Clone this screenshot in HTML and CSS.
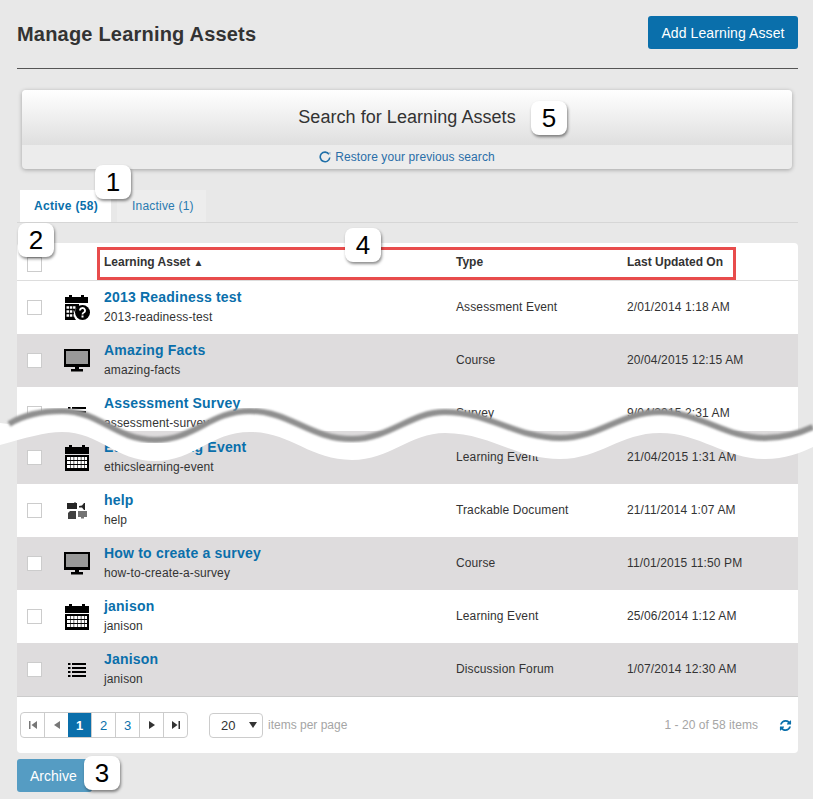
FILE: index.html
```html
<!DOCTYPE html>
<html lang="en">
  <head>
    <meta charset="UTF-8" />
    <title>Manage Learning Assets</title>
    <link rel="stylesheet" href="styles.css">
  </head>
  <body>
    <!-- Icon Sprites -->
    <svg class="sprites" aria-hidden="true">
      <symbol id="icon-calendar" viewBox="0 0 24 26">
        <path d="M0 2h4V0h3v2h10V0h3v2h4v7H0z" />
        <rect y="10" width="24" height="16" />
        <path d="M2 13.500h20M2 17.500h20M2 21.500h20" stroke="#fff" stroke-width="3" stroke-dasharray="3 .6" />
      </symbol>
      <symbol id="icon-calendar-q" viewBox="0 0 25 25">
        <path d="M0 2h4V0h3v2h9V0h3v2h4v6H0z" />
        <path d="M0 9h14v3a8 8 0 0 0-3 13H0z" />
        <path d="M1.500 12.500h9M1.500 16.500h7M1.500 20.500h7" stroke="#fff" stroke-width="2.500" stroke-dasharray="2.500 .8" />
        <circle cx="17.500" cy="17.500" r="7.500" />
        <path d="M15 15.500a2.500 2.500 0 1 1 3.500 2.300c-.7.300-1 .8-1 1.600" fill="none" stroke="#fff" stroke-width="1.800" />
        <rect x="16.500" y="20.500" width="2" height="2" fill="#fff" />
      </symbol>
      <symbol id="icon-monitor" viewBox="0 0 26 23">
        <path d="M0 0h26v18H0z" />
        <path d="M2 2h22v13H2z" fill="#999" />
        <path d="M11 18h4v2h4v2.500H7V20h4z" />
      </symbol>
      <symbol id="icon-list" viewBox="0 0 18 16">
        <path d="M0 1h2.500v2H0zM4 1h14v2H4zM0 5h2.500v2H0zM4 5h14v2H4zM0 9h2.500v2H0zM4 9h14v2H4zM0 13h2.500v2H0zM4 13h14v2H4z" />
      </symbol>
      <symbol id="icon-document" viewBox="0 0 20 17">
        <path d="M0 1h7V.5h2V1h1v6H0z" opacity=".85" />
        <path d="M12 4l3-.5L17 1h1v7h-1l-2-2.500h-3z" opacity=".85" />
        <path d="M1 11l2-2h6v8H1z" opacity=".75" />
        <path d="M11 9h9v6h-3v1.500h-3V15h-3z" opacity=".55" />
      </symbol>
      <symbol id="icon-refresh" viewBox="0 0 1792 1792">
        <path d="M1639 1056q0 5-1 7-64 268-268 434.500t-478 166.500q-146 0-282.500-55t-243.500-157l-129 129q-19 19-45 19t-45-19-19-45v-448q0-26 19-45t45-19h448q26 0 45 19t19 45-19 45l-137 137q71 66 161 102t187 36q134 0 250-65t186-179q11-17 53-117 8-23 30-23h192q13 0 22.500 9.500t9.500 22.500zm25-800v448q0 26-19 45t-45 19h-448q-26 0-45-19t-19-45 19-45l138-138q-148-137-349-137-134 0-250 65t-186 179q-11 17-53 117-8 23-30 23h-199q-13 0-22.500-9.500t-9.500-22.500v-7q65-268 270-434.500t480-166.500q146 0 284 55.500t245 156.500l130-129q19-19 45-19t45 19 19 45z" />
      </symbol>
    </svg>

    <!-- Page Header -->
    <header class="page-header">
      <h1>Manage Learning Assets</h1>
      <button class="btn btn-add" type="button">Add Learning Asset</button>
    </header>

    <!-- Search Panel -->
    <section class="search-panel">
      <h2>Search for Learning Assets</h2>
      <a class="restore-link" href="#">
        <svg viewBox="0 0 12 12" width="12" height="12">
          <path d="M10 3.200A4.800 4.800 0 1 0 10.800 6.500" fill="none" stroke="#1f6fa8" stroke-width="1.600" />
          <path d="M9 1.500l2.500-.5v3z" fill="#9db9cf" />
        </svg>
        Restore your previous search
      </a>
    </section>

    <!-- Tabs -->
    <ul class="tabs">
      <li class="tab active">Active (58)</li>
      <li class="tab">Inactive (1)</li>
    </ul>

    <!-- Asset Table -->
    <section class="asset-card">
      <div class="asset-row head-row">
        <span class="cell-check"><input type="checkbox" /></span>
        <span class="cell-icon"></span>
        <span class="head-label">Learning Asset <i class="sort-arrow">▲</i></span>
        <span class="head-label">Type</span>
        <span class="head-label">Last Updated On</span>
      </div>

      <div class="asset-row">
        <span class="cell-check"><input type="checkbox" /></span>
        <span class="cell-icon"><svg width="25" height="25"><use href="#icon-calendar-q" /></svg></span>
        <div class="cell-name"><a href="#">2013 Readiness test</a><small>2013-readiness-test</small></div>
        <span class="cell-text">Assessment Event</span>
        <span class="cell-text">2/01/2014 1:18 AM</span>
      </div>
      <div class="asset-row shaded">
        <span class="cell-check"><input type="checkbox" /></span>
        <span class="cell-icon"><svg width="26" height="23"><use href="#icon-monitor" /></svg></span>
        <div class="cell-name"><a href="#">Amazing Facts</a><small>amazing-facts</small></div>
        <span class="cell-text">Course</span>
        <span class="cell-text">20/04/2015 12:15 AM</span>
      </div>
      <!-- This row runs under the torn edge, so it is shorter than the rest. -->
      <div class="asset-row cut-row">
        <span class="cell-check"><input type="checkbox" /></span>
        <span class="cell-icon"><svg width="18" height="16"><use href="#icon-list" /></svg></span>
        <div class="cell-name"><a href="#">Assessment Survey</a><small>assessment-survey</small></div>
        <span class="cell-text">Survey</span>
        <span class="cell-text">9/04/2015 2:31 AM</span>
      </div>
      <div class="asset-row shaded">
        <span class="cell-check"><input type="checkbox" /></span>
        <span class="cell-icon"><svg width="24" height="26"><use href="#icon-calendar" /></svg></span>
        <div class="cell-name"><a href="#">Ethicslearning Event</a><small>ethicslearning-event</small></div>
        <span class="cell-text">Learning Event</span>
        <span class="cell-text">21/04/2015 1:31 AM</span>
      </div>
      <div class="asset-row">
        <span class="cell-check"><input type="checkbox" /></span>
        <span class="cell-icon"><svg width="20" height="17"><use href="#icon-document" /></svg></span>
        <div class="cell-name"><a href="#">help</a><small>help</small></div>
        <span class="cell-text">Trackable Document</span>
        <span class="cell-text">21/11/2014 1:07 AM</span>
      </div>
      <div class="asset-row shaded">
        <span class="cell-check"><input type="checkbox" /></span>
        <span class="cell-icon"><svg width="26" height="23"><use href="#icon-monitor" /></svg></span>
        <div class="cell-name"><a href="#">How to create a survey</a><small>how-to-create-a-survey</small></div>
        <span class="cell-text">Course</span>
        <span class="cell-text">11/01/2015 11:50 PM</span>
      </div>
      <div class="asset-row">
        <span class="cell-check"><input type="checkbox" /></span>
        <span class="cell-icon"><svg width="24" height="26"><use href="#icon-calendar" /></svg></span>
        <div class="cell-name"><a href="#">janison</a><small>janison</small></div>
        <span class="cell-text">Learning Event</span>
        <span class="cell-text">25/06/2014 1:12 AM</span>
      </div>
      <div class="asset-row shaded">
        <span class="cell-check"><input type="checkbox" /></span>
        <span class="cell-icon"><svg width="18" height="16"><use href="#icon-list" /></svg></span>
        <div class="cell-name"><a href="#">Janison</a><small>janison</small></div>
        <span class="cell-text">Discussion Forum</span>
        <span class="cell-text">1/07/2014 12:30 AM</span>
      </div>

      <!-- Pager -->
      <footer class="pager-bar">
        <ul class="pager">
          <li><svg viewBox="0 0 8 8" width="8" height="8"><path d="M0 0h1.500v8H0zM8 0v8L2.500 4z" fill="#777" /></svg></li>
          <li><svg viewBox="0 0 8 8" width="8" height="8"><path d="M7 0v8L1 4z" fill="#777" /></svg></li>
          <li class="current">1</li>
          <li class="page-num">2</li>
          <li class="page-num">3</li>
          <li><svg viewBox="0 0 8 8" width="8" height="8"><path d="M1 0v8l6-4z" fill="#333" /></svg></li>
          <li><svg viewBox="0 0 8 8" width="8" height="8"><path d="M0 0v8l5.500-4zM6.500 0H8v8H6.500z" fill="#333" /></svg></li>
        </ul>
        <div class="page-size">20<i class="page-size-arrow"></i></div>
        <span class="pager-note">items per page</span>
        <span class="pager-note pager-count">1 - 20 of 58 items</span>
        <svg class="refresh" width="13" height="13"><use href="#icon-refresh" /></svg>
      </footer>
    </section>

    <button class="btn btn-archive" type="button">Archive</button>

    <!-- Torn Edge -->
    <svg class="tear" viewBox="0 400 813 70" width="813" height="70" aria-hidden="true">
      <defs>
        <filter id="soft"><feGaussianBlur stdDeviation="0.9" /></filter>
      </defs>
      <path fill="#fff" d="M0 423 L8 424 C25 414 45 411 62 411 C100 411 115 440 155 440 C195 440 210 411 250 411 C290 411 310 439 352 439 C390 439 410 412 445 412 C490 412 515 438 560 438 C600 438 620 412 660 412 C700 412 725 438 765 438 C785 438 800 433 813 427 L813 447 C800 453 785 459 765 459 C725 459 700 433 660 433 C620 433 600 459 560 459 C515 459 490 433 445 433 C410 433 390 460 352 460 C310 460 290 432 250 432 C210 432 195 461 155 461 C115 461 100 432 62 432 C45 432 25 438 0 445 Z" />
      <path fill="none" stroke="#8f8f8f" stroke-width="6" filter="url(#soft)" d="M9 424 C25 414 45 411 62 411 C100 411 115 440 155 440 C195 440 210 411 250 411 C290 411 310 439 352 439 C390 439 410 412 445 412 C490 412 515 438 560 438 C600 438 620 412 660 412 C700 412 725 438 765 438 C785 438 800 433 813 427" />
    </svg>

    <!-- Annotations -->
    <div class="header-mark"></div>
    <span class="callout callout-1">1</span>
    <span class="callout callout-2">2</span>
    <span class="callout callout-3">3</span>
    <span class="callout callout-4">4</span>
    <span class="callout callout-5">5</span>
  </body>
</html>
```
FILE: styles.css
```css
* {
  box-sizing: border-box;
}
html,
body {
  height: 799px;
  overflow: hidden;
}
body {
  position: relative;
  margin: 0;
  padding: 16px 15px 0 17px;
  background-color: #e8e8e8;
  color: #333333;
  font-family: "Liberation Sans", Arial, sans-serif;
  font-size: 12px;
}
a {
  color: #0a6fab;
  text-decoration: none;
}
.sprites {
  display: none;
}
.btn {
  height: 33px;
  border: none;
  border-radius: 3px;
  color: #ffffff;
  font-family: inherit;
  font-size: 14px;
}

/* Page header */
.page-header {
  display: flex;
  justify-content: space-between;
  align-items: flex-start;
  height: 53px;
  border-bottom: 1px solid #555555;
}
.page-header h1 {
  margin: 6px 0 0;
  font-size: 20px;
  letter-spacing: 0.2px;
  line-height: 24px;
}
.btn-add {
  width: 150px;
  background-color: #0a6fab;
  letter-spacing: 0.1px;
}

/* Search panel */
.search-panel {
  display: flex;
  flex-direction: column;
  height: 79px;
  margin: 21px 6px 0 5px;
  border-radius: 4px;
  background-color: #ececec;
  box-shadow: 0 1px 4px rgba(0, 0, 0, 0.3);
  overflow: hidden;
}
.search-panel h2 {
  height: 55px;
  margin: 0;
  background: linear-gradient(#ffffff, #dfdfdf);
  font-size: 18px;
  font-weight: normal;
  letter-spacing: 0.05px;
  line-height: 54px;
  text-align: center;
}
.restore-link {
  display: flex;
  justify-content: center;
  align-items: center;
  column-gap: 4px;
  flex: 1;
  color: #2a6ea8;
  letter-spacing: 0.1px;
}

/* Tabs */
.tabs {
  display: flex;
  column-gap: 6px;
  height: 33px;
  margin: 21px 0 0;
  padding: 0 0 0 3px;
  border-bottom: 1px solid #d6d6d6;
  list-style: none;
}
.tab {
  width: 89px;
  height: 32px;
  padding-left: 15px;
  background-color: #ededed;
  color: #2a7ab0;
  letter-spacing: 0.2px;
  line-height: 32px;
}
.tab.active {
  width: 91px;
  padding-left: 14px;
  background-color: #ffffff;
  color: #0a6fab;
  font-weight: bold;
  letter-spacing: 0.3px;
}

/* Asset table */
.asset-card {
  height: 510px;
  margin-top: 20px;
  border-radius: 4px;
  background-color: #ffffff;
  overflow: hidden;
}
.asset-row {
  display: grid;
  grid-template-columns: 37px 40px 352px 171px 1fr;
  height: 53px;
  padding-left: 10px;
  letter-spacing: 0.12px;
}
.asset-row.shaded {
  background-color: #dedcdd;
}
.asset-row.cut-row {
  height: 44px;
  overflow: hidden;
}
.asset-row.head-row {
  height: 38px;
  border-bottom: 1px solid #dddddd;
  letter-spacing: 0;
}
.cell-check {
  display: flex;
  align-items: center;
  height: 53px;
}
.cell-check input {
  appearance: none;
  width: 15px;
  height: 15px;
  margin: 0;
  border: 1px solid #cccccc;
  background-color: #ffffff;
}
.head-row .cell-check {
  height: 43px;
}
.cell-icon {
  display: flex;
  justify-content: center;
  align-items: center;
  width: 26px;
  height: 53px;
}
.head-label {
  font-weight: bold;
  line-height: 38px;
}
.sort-arrow {
  font-size: 10px;
  font-style: normal;
}
.cell-name {
  padding-top: 6px;
}
.cell-name a {
  display: block;
  font-size: 14px;
  font-weight: bold;
  letter-spacing: 0.2px;
  line-height: 20px;
}
.cell-name small {
  display: block;
  font-size: 12px;
  line-height: 20px;
}
.cell-text {
  line-height: 53px;
}

/* Pager */
.pager-bar {
  display: flex;
  align-items: center;
  height: 57px;
  padding: 0 6px 0 3px;
  border-top: 1px solid #cccccc;
}
.pager {
  display: flex;
  width: 168px;
  height: 26px;
  margin: 0;
  padding: 0;
  border: 1px solid #cccccc;
  border-radius: 4px;
  list-style: none;
  overflow: hidden;
}
.pager li {
  display: flex;
  flex: 1;
  justify-content: center;
  align-items: center;
  border-left: 1px solid #cccccc;
  font-size: 13px;
}
.pager li:first-child {
  border-left: none;
}
.pager .current {
  border-left: none;
  background-color: #0a6fab;
  color: #ffffff;
  font-weight: bold;
}
.pager .page-num {
  color: #0a6fab;
}
.page-size {
  display: flex;
  justify-content: space-between;
  align-items: center;
  width: 54px;
  height: 25px;
  margin-left: 21px;
  padding: 0 5px 0 11px;
  border: 1px solid #cccccc;
  border-radius: 4px;
  font-size: 13px;
}
.page-size-arrow {
  border-top: 6px solid #333333;
  border-left: 4px solid transparent;
  border-right: 4px solid transparent;
}
.pager-note {
  margin-left: 5px;
  color: #a5a5a5;
}
.pager-count {
  margin-left: auto;
  letter-spacing: 0.05px;
}
.refresh {
  margin-left: 21px;
  fill: #0a6fab;
}
.btn-archive {
  display: block;
  width: 75px;
  margin-top: 6px;
  padding: 0 0 0 13px;
  background-color: #559cc3;
  text-align: left;
}

/* Torn edge, laid over the table */
.tear {
  position: absolute;
  top: 400px;
  left: 0;
}

/* Annotations */
.header-mark {
  position: absolute;
  top: 247px;
  left: 97px;
  width: 639px;
  height: 33px;
  border: 3px solid #e84c4c;
}
.callout {
  position: absolute;
  width: 36px;
  height: 34px;
  border-radius: 8px;
  background-color: #ffffff;
  box-shadow: 1px 2px 3px rgba(0, 0, 0, 0.45);
  color: #000000;
  font-size: 26px;
  line-height: 34px;
  text-align: center;
}
.callout-1 {
  top: 165px;
  left: 95px;
}
.callout-2 {
  top: 223px;
  left: 18px;
}
.callout-3 {
  top: 756px;
  left: 84px;
}
.callout-4 {
  top: 228px;
  left: 345px;
}
.callout-5 {
  top: 101px;
  left: 531px;
}
```
